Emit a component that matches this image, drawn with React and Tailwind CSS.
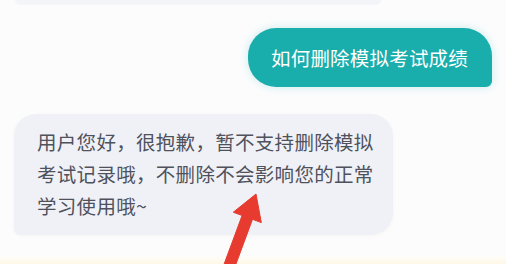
export default function App() {
  const font = { fontFamily: '"Noto Sans CJK SC", "Noto Sans", sans-serif' };
  return (
    <div className="relative w-[506px] h-[264px] overflow-hidden bg-[#fcfcfd] flex flex-col" style={font}>
      <div className="ml-[15px] w-[366px] h-[5px] bg-[#f4f5f8] rounded-b-[6px]" />
      <div className="self-end mr-[14px] mt-[23px] pl-[23px] pr-[24px] h-[59px] flex items-center bg-[#19adab] text-white text-[19.5px] tracking-[0.2px] leading-[28px] rounded-tl-[28px] rounded-bl-[28px] rounded-tr-[28px] rounded-br-[6px] shadow-[0_0_10px_rgba(25,173,171,0.22)] whitespace-nowrap">
        如何删除模拟考试成绩
      </div>
      <div className="self-start ml-[14px] mt-[27px] w-[379px] pl-[23px] pt-[12px] pb-[13px] bg-[#eff1f6] text-[#4f525d] text-[19.5px] tracking-[0.3px] leading-[32px] rounded-tl-[22px] rounded-tr-[22px] rounded-br-[22px] rounded-bl-[6px] whitespace-nowrap shadow-[0_1px_4px_rgba(0,0,0,0.03)]">
        用户您好，很抱歉，暂不支持删除模拟<br />
        考试记录哦，不删除不会影响您的正常<br />
        学习使用哦~
      </div>
      <div className="mt-auto h-[7px] bg-gradient-to-b from-[#fdfcf6] to-[#fff8e8]" />
      <svg className="absolute inset-0" width="506" height="264" viewBox="0 0 506 264">
        <polygon
          points="256,194 261.3,222.6 252.5,219.3 233.4,270.9 223,267.1 242.1,215.5 233.3,212.2"
          fill="#e63b2e"
          stroke="#e63b2e"
          strokeWidth="1"
          strokeLinejoin="round"
        />
      </svg>
    </div>
  );
}
